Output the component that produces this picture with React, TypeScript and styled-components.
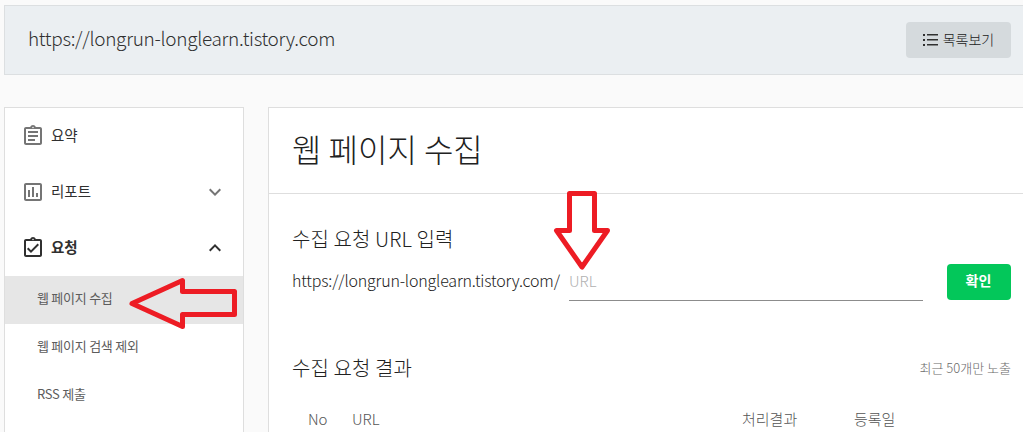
import React from 'react'
import styled, { createGlobalStyle, css } from 'styled-components'

const GlobalStyle = createGlobalStyle`
  * {
    box-sizing: border-box;
  }
  body {
    margin: 0;
    height: 432px;
    overflow: hidden;
    background: #fafafa;
    color: #212121;
    font-family: 'Noto Sans CJK KR', sans-serif;
    font-weight: 300;
  }
`

const Page = styled.div`
  position: relative;
  width: 1023px;
  height: 432px;
  padding: 5px 0 0 4px;
  overflow: hidden;
`

const SiteBar = styled.header`
  display: flex;
  align-items: center;
  justify-content: space-between;
  width: 1032px;
  height: 70px;
  padding: 0 24px 0 23px;
  border: 1px solid #dcdfe1;
  background: #ebeff2;
`

const SiteUrl = styled.span`
  padding-bottom: 4px;
  font-size: 19px;
  line-height: 28px;
  letter-spacing: -0.31px;
  color: #303030;
`

const ListButton = styled.button`
  display: flex;
  align-items: center;
  justify-content: center;
  gap: 5px;
  width: 105px;
  height: 36px;
  padding: 0 0 2px;
  border: 0;
  border-radius: 4px;
  background: #d5dadd;
  color: #212121;
  font: inherit;
  font-size: 14px;
`

const Columns = styled.div`
  display: flex;
  gap: 24px;
  width: 1032px;
  margin-top: 32px;
`

const Sidebar = styled.nav`
  width: 240px;
  height: 400px;
  border: 1px solid #dedede;
  background: #fff;
`

const MenuItem = styled.div<{ $active?: boolean }>`
  display: flex;
  align-items: center;
  height: 56px;
  padding: 0 16px 1px 16px;
  font-size: 14.5px;
  font-weight: 400;
  color: #303030;
  ${props =>
    props.$active &&
    css`
      font-weight: 700;
    `}

  svg {
    color: ${props => (props.$active ? '#303030' : '#757575')};
  }
`

const MenuLabel = styled.span`
  flex: 1;
  margin-left: 6px;
  padding-bottom: 2px;
`

const SubItem = styled.div<{ $selected?: boolean }>`
  display: flex;
  align-items: center;
  height: 48px;
  padding: 0 0 5px 32px;
  background: ${props => (props.$selected ? '#e6e6e6' : 'transparent')};
  font-size: 13px;
  font-weight: 400;
  letter-spacing: -0.25px;
  color: #5c5c5c;
`

const Panel = styled.main`
  width: 768px;
  height: 400px;
  border: 1px solid #dedede;
  background: #fff;
`

const PanelHeader = styled.div`
  display: flex;
  align-items: center;
  height: 86px;
  padding: 0 23px 6px;
  border-bottom: 1px solid #dedede;
`

const Title = styled.h1`
  margin: 0;
  font-size: 32px;
  font-weight: 300;
`

const PanelBody = styled.div`
  padding: 30px 24px 0 23px;
`

const SectionTitle = styled.h2`
  margin: 0;
  font-size: 20px;
  font-weight: 300;
  line-height: 30px;
  letter-spacing: 0.1px;
`

const UrlForm = styled.div`
  display: flex;
  align-items: center;
  height: 36px;
  margin-top: 10px;
`

const UrlPrefix = styled.span`
  width: 277px;
  padding-bottom: 5px;
  font-size: 16px;
  line-height: 24px;
  letter-spacing: -0.18px;
  white-space: nowrap;
`

const UrlInput = styled.input`
  width: 354px;
  height: 37px;
  padding: 0 0 2px;
  border: 0;
  border-bottom: 1px solid #8c8c8c;
  background: transparent;
  font: inherit;
  font-size: 15px;

  &::placeholder {
    color: #b0b0b0;
    opacity: 1;
  }
`

const SubmitButton = styled.button`
  width: 64px;
  height: 36px;
  margin-left: 24px;
  padding: 0 1px 4px 0;
  border: 0;
  border-radius: 4px;
  background: #03c75a;
  color: #fff;
  font: inherit;
  font-size: 14px;
  font-weight: 700;
`

const ResultHeader = styled.div`
  display: flex;
  align-items: center;
  justify-content: space-between;
  margin-top: 53px;
`

const Notice = styled.span`
  padding-bottom: 1px;
  font-size: 13px;
  color: #6a6a6a;
`

const TableHead = styled.div`
  display: grid;
  grid-template-columns: 44px 390px 112px 1fr;
  margin-top: 24px;
  padding-left: 16px;
  font-size: 15px;
  line-height: 24px;
  color: #555;
`

const Annotations = styled.svg`
  position: absolute;
  top: 0;
  left: 0;
  pointer-events: none;
`

const ListIcon = () => (
  <svg width="15" height="13" viewBox="0 0 15 13" fill="#303030">
    <path d="M0 1h2v2H0zM0 6h2v2H0zM0 11h2v2H0zM4 1h11v1.500H4zM4 6h11v1.500H4zM4 11h11v1.500H4z" />
  </svg>
)

const SummaryIcon = () => (
  <svg width="24" height="24" viewBox="0 0 24 24" fill="currentColor">
    <path d="M7 15h7v2H7zm0-4h10v2H7zm0-4h10v2H7zm12-4h-4.180C14.400 1.840 13.300 1 12 1s-2.400.84-2.820 2H5c-1.100 0-2 .9-2 2v14c0 1.100.9 2 2 2h14c1.100 0 2-.9 2-2V5c0-1.100-.9-2-2-2zm-7-.25c.41 0 .75.34.75.75s-.34.75-.75.75-.75-.34-.75-.75.34-.75.75-.75zM19 19H5V5h14v14z" />
  </svg>
)

const ReportIcon = () => (
  <svg width="24" height="24" viewBox="0 0 24 24" fill="currentColor">
    <path d="M19 3H5c-1.100 0-2 .9-2 2v14c0 1.100.9 2 2 2h14c1.100 0 2-.9 2-2V5c0-1.100-.9-2-2-2zm0 16H5V5h14v14zM7 10h2v7H7zm4-3h2v10h-2zm4 6h2v4h-2z" />
  </svg>
)

const RequestIcon = () => (
  <svg width="24" height="24" viewBox="0 0 24 24" fill="currentColor">
    <path d="M19 3h-4.180C14.400 1.840 13.300 1 12 1s-2.400.84-2.820 2H5c-1.100 0-2 .9-2 2v14c0 1.100.9 2 2 2h14c1.100 0 2-.9 2-2V5c0-1.100-.9-2-2-2zm-7-.25c.41 0 .75.34.75.75s-.34.75-.75.75-.75-.34-.75-.75.34-.75.75-.75zM19 19H5V5h14v14zM17.990 9l-1.410-1.420-6.590 6.590-2.580-2.570-1.420 1.410 4 3.990z" />
  </svg>
)

const Chevron = ({ up }: { up?: boolean }) => (
  <svg width="24" height="24" viewBox="0 0 24 24" fill="currentColor">
    <path
      d={
        up
          ? 'M7.410 15.410 12 10.830l4.590 4.580L18 14l-6-6-6 6z'
          : 'M7.410 8.590 12 13.170l4.590-4.580L18 10l-6 6-6-6z'
      }
    />
  </svg>
)

const App: React.FC = () => (
  <>
    <GlobalStyle />
    <Page>
      <SiteBar>
        <SiteUrl>https://longrun-longlearn.tistory.com</SiteUrl>
        <ListButton>
          <ListIcon />
          목록보기
        </ListButton>
      </SiteBar>
      <Columns>
        <Sidebar>
          <MenuItem>
            <SummaryIcon />
            <MenuLabel>요약</MenuLabel>
          </MenuItem>
          <MenuItem>
            <ReportIcon />
            <MenuLabel>리포트</MenuLabel>
            <Chevron />
          </MenuItem>
          <MenuItem $active>
            <RequestIcon />
            <MenuLabel>요청</MenuLabel>
            <Chevron up />
          </MenuItem>
          <SubItem $selected>웹 페이지 수집</SubItem>
          <SubItem>웹 페이지 검색 제외</SubItem>
          <SubItem>RSS 제출</SubItem>
        </Sidebar>
        <Panel>
          <PanelHeader>
            <Title>웹 페이지 수집</Title>
          </PanelHeader>
          <PanelBody>
            <SectionTitle>수집 요청 URL 입력</SectionTitle>
            <UrlForm>
              <UrlPrefix>https://longrun-longlearn.tistory.com/</UrlPrefix>
              <UrlInput placeholder="URL" />
              <SubmitButton>확인</SubmitButton>
            </UrlForm>
            <ResultHeader>
              <SectionTitle>수집 요청 결과</SectionTitle>
              <Notice>최근 50개만 노출</Notice>
            </ResultHeader>
            <TableHead>
              <span>No</span>
              <span>URL</span>
              <span>처리결과</span>
              <span>등록일</span>
            </TableHead>
          </PanelBody>
        </Panel>
      </Columns>
      <Annotations
        width="1023"
        height="432"
        fill="none"
        stroke="#ed1c24"
        strokeWidth="5"
        strokeLinejoin="round"
      >
        <path d="M132 303.500 182.500 280.500V291.500H234.500V314.500H182.500V326.500Z" />
        <path d="M569.500 193.500H594.500V230.500H607.500L582 267 556.500 230.500H569.500Z" />
      </Annotations>
    </Page>
  </>
)

export default App
